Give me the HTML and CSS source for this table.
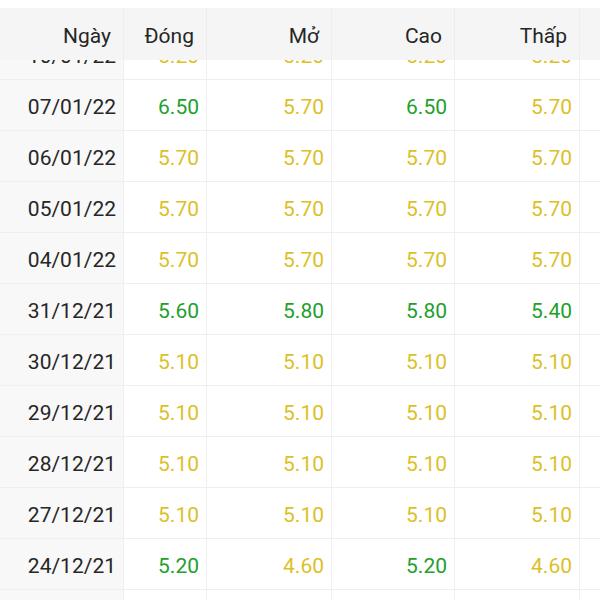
FILE: index.html
```html
<!DOCTYPE html>
<html lang="vi">
<head>
<meta charset="utf-8">
<link rel="stylesheet" href="styles.css">
</head>
<body>
<div class="table">
  <div class="head">
    <div class="row">
      <div class="cell first">Ngày</div>
      <div class="cell">Đóng</div>
      <div class="cell">Mở</div>
      <div class="cell">Cao</div>
      <div class="cell">Thấp</div>
      <div class="cell last"></div>
    </div>
  </div>
  <div class="body">
    <div class="rows">
      <div class="row"><div class="cell first">10/01/22</div><div class="cell y">5.20</div><div class="cell y">5.20</div><div class="cell y">5.20</div><div class="cell y">5.20</div><div class="cell last"></div></div>
      <div class="row"><div class="cell first">07/01/22</div><div class="cell g">6.50</div><div class="cell y">5.70</div><div class="cell g">6.50</div><div class="cell y">5.70</div><div class="cell last"></div></div>
      <div class="row"><div class="cell first">06/01/22</div><div class="cell y">5.70</div><div class="cell y">5.70</div><div class="cell y">5.70</div><div class="cell y">5.70</div><div class="cell last"></div></div>
      <div class="row"><div class="cell first">05/01/22</div><div class="cell y">5.70</div><div class="cell y">5.70</div><div class="cell y">5.70</div><div class="cell y">5.70</div><div class="cell last"></div></div>
      <div class="row"><div class="cell first">04/01/22</div><div class="cell y">5.70</div><div class="cell y">5.70</div><div class="cell y">5.70</div><div class="cell y">5.70</div><div class="cell last"></div></div>
      <div class="row"><div class="cell first">31/12/21</div><div class="cell g">5.60</div><div class="cell g">5.80</div><div class="cell g">5.80</div><div class="cell g">5.40</div><div class="cell last"></div></div>
      <div class="row"><div class="cell first">30/12/21</div><div class="cell y">5.10</div><div class="cell y">5.10</div><div class="cell y">5.10</div><div class="cell y">5.10</div><div class="cell last"></div></div>
      <div class="row"><div class="cell first">29/12/21</div><div class="cell y">5.10</div><div class="cell y">5.10</div><div class="cell y">5.10</div><div class="cell y">5.10</div><div class="cell last"></div></div>
      <div class="row"><div class="cell first">28/12/21</div><div class="cell y">5.10</div><div class="cell y">5.10</div><div class="cell y">5.10</div><div class="cell y">5.10</div><div class="cell last"></div></div>
      <div class="row"><div class="cell first">27/12/21</div><div class="cell y">5.10</div><div class="cell y">5.10</div><div class="cell y">5.10</div><div class="cell y">5.10</div><div class="cell last"></div></div>
      <div class="row"><div class="cell first">24/12/21</div><div class="cell g">5.20</div><div class="cell y">4.60</div><div class="cell g">5.20</div><div class="cell y">4.60</div><div class="cell last"></div></div>
      <div class="row"><div class="cell first"></div><div class="cell"></div><div class="cell"></div><div class="cell"></div><div class="cell"></div><div class="cell last"></div></div>
    </div>
  </div>
</div>
</body>
</html>
```
FILE: styles.css
```css
html, body {
  margin: 0;
  padding: 0;
  background: #ffffff;
  overflow: hidden;
  height: 600px;
}
body {
  font-family: Roboto, "Noto Sans", sans-serif;
  font-size: 21px;
  color: #262626;
}
.table {
  width: 600px;
  display: flex;
  flex-direction: column;
  height: 600px;
}
.row {
  display: grid;
  grid-template-columns: 124px 83px 125px 123px 125px 1fr;
  height: 51px;
  box-sizing: border-box;
  border-bottom: 1px solid #efefef;
}
.cell {
  display: flex;
  align-items: center;
  justify-content: flex-end;
  padding-right: 7px;
  padding-top: 3px;
  border-right: 1px solid #f0f0f0;
  box-sizing: border-box;
  white-space: nowrap;
}
.cell.last {
  border-right: none;
}
.head {
  padding-top: 8px;
  background: #ffffff;
  flex: none;
}
.head .row {
  height: 52px;
  background: #f5f5f5;
  border-bottom: none;
}
.head .cell {
  color: #262626;
  border-right-color: #ededed;
  padding-right: 12px;
  padding-top: 4px;
}
.body {
  flex: 1;
  overflow: hidden;
}
.rows {
  margin-top: -31px;
}
.body .cell.first {
  background: #f8f8f8;
}
.g { color: #22a02c; }
.y { color: #dcc028; }
```
